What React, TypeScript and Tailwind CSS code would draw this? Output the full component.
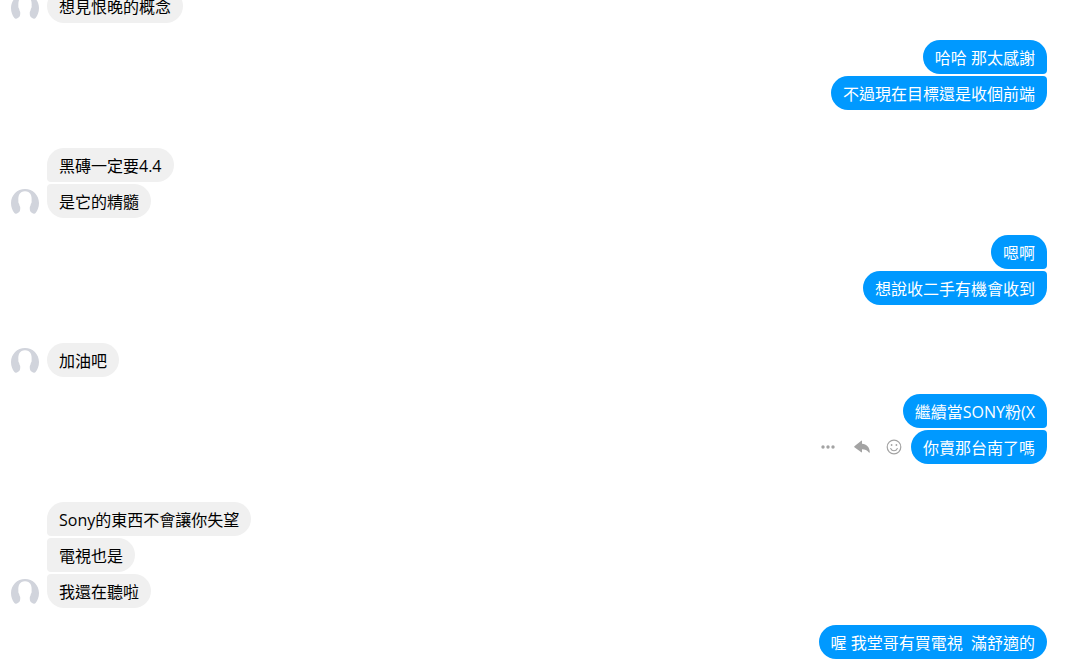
import React from "react";

type Group = {
  from: "them" | "me";
  messages: string[];
  actionsOn?: number;
};

const groups: Group[] = [
  { from: "them", messages: ["想見恨晚的概念"] },
  { from: "me", messages: ["哈哈 那太感謝", "不過現在目標還是收個前端"] },
  { from: "them", messages: ["黑磚一定要4.4", "是它的精髓"] },
  { from: "me", messages: ["嗯啊", "想說收二手有機會收到"] },
  { from: "them", messages: ["加油吧"] },
  { from: "me", messages: ["繼續當SONY粉(X", "你賣那台南了嗎"], actionsOn: 1 },
  { from: "them", messages: ["Sony的東西不會讓你失望", "電視也是", "我還在聽啦"] },
  { from: "me", messages: ["喔 我堂哥有買電視  滿舒適的"] },
];

function Avatar() {
  return (
    <svg viewBox="0 0 28 28" className="mb-px size-7 shrink-0" aria-hidden="true">
      <path
        fill="#d1d4dc"
        d="M14 0C6.200 0 0 6.200 0 14c0 4 1.400 7.400 3.400 10 .6.800 1.500.9 2.400.4 1.500-.8 2.900-1.700 3.200-3 .3-1.200.3-2.200.2-3.400-.6-.9-.9-2-1.100-3.300-.7-.7-.9-1.600-.7-2.700C6.900 6.500 8.600 2.200 14 2.200S21.100 6.500 20.600 12c.2 1.100 0 2-.7 2.700-.2 1.300-.5 2.400-1.100 3.300-.1 1.200-.1 2.200.2 3.400.3 1.300 1.700 2.200 3.200 3 .9.500 1.800.4 2.400-.4C26.600 21.400 28 18 28 14 28 6.200 21.800 0 14 0z"
      />
    </svg>
  );
}

function Actions() {
  return (
    <div className="mr-[9px] flex items-center gap-4 text-[#a3a3a3]">
      <button type="button" aria-label="More" className="mr-0.5 block">
        <svg viewBox="0 0 16 16" className="size-4" fill="currentColor">
          <circle cx="3" cy="8" r="1.700" />
          <circle cx="8" cy="8" r="1.700" />
          <circle cx="13" cy="8" r="1.700" />
        </svg>
      </button>
      <button type="button" aria-label="Reply" className="block">
        <svg viewBox="0 0 16 16" className="size-4" fill="currentColor">
          <path d="M.4 7.300 7.300 1.700c.3-.2.700 0 .7.400v2.700c4.600.2 7.600 3.400 7.800 8.400 0 .5-.6.700-.9.300-1.700-2.300-3.900-3.300-6.900-3.300v2.700c0 .4-.4.600-.7.400L.4 8.200c-.3-.2-.3-.7 0-.9z" />
        </svg>
      </button>
      <button type="button" aria-label="React" className="block">
        <svg viewBox="0 0 16 16" className="size-4" fill="none" stroke="currentColor">
          <circle cx="8" cy="8" r="6.800" strokeWidth="1.200" />
          <path d="M4.700 9.500c.6 1.500 1.800 2.300 3.300 2.300s2.700-.8 3.300-2.300" strokeWidth="1.100" strokeLinecap="round" />
          <circle cx="5.600" cy="6" r=".9" fill="currentColor" stroke="none" />
          <circle cx="10.400" cy="6" r=".9" fill="currentColor" stroke="none" />
        </svg>
      </button>
    </div>
  );
}

function Bubble({ text, mine, first, last }: { text: string; mine: boolean; first: boolean; last: boolean }) {
  const tone = mine ? "bg-[#0099ff] text-white" : "bg-[#f0f0f0] text-black";
  const top = first ? "" : mine ? "rounded-tr-sm" : "rounded-tl-sm";
  const bottom = last ? "" : mine ? "rounded-br-sm" : "rounded-bl-sm";
  return (
    <p className={`rounded-[17px] px-3 pt-2 pb-1.5 leading-5 whitespace-pre-wrap ${tone} ${top} ${bottom}`}>
      {text}
    </p>
  );
}

function MessageGroup({ group }: { group: Group }) {
  const mine = group.from === "me";
  const count = group.messages.length;
  return (
    <section className={mine ? "mt-[17px] flex justify-end first:mt-0" : "mt-[38px] flex items-end gap-2 first:mt-0"}>
      {!mine && <Avatar />}
      <div className={mine ? "flex flex-col items-end gap-0.5" : "flex flex-col items-start gap-0.5"}>
        {group.messages.map((text, i) => (
          <div key={text} className="flex items-center">
            {group.actionsOn === i && <Actions />}
            <Bubble text={text} mine={mine} first={i === 0} last={i === count - 1} />
          </div>
        ))}
      </div>
    </section>
  );
}

export default function App() {
  return (
    <main className="h-screen overflow-hidden bg-white font-['Open_Sans','Noto_Sans_CJK_TC',sans-serif] text-base">
      <div className="-mt-[11px] pr-[30px] pb-3 pl-[11px]">
        {groups.map((group) => (
          <MessageGroup key={group.messages[0]} group={group} />
        ))}
      </div>
    </main>
  );
}
